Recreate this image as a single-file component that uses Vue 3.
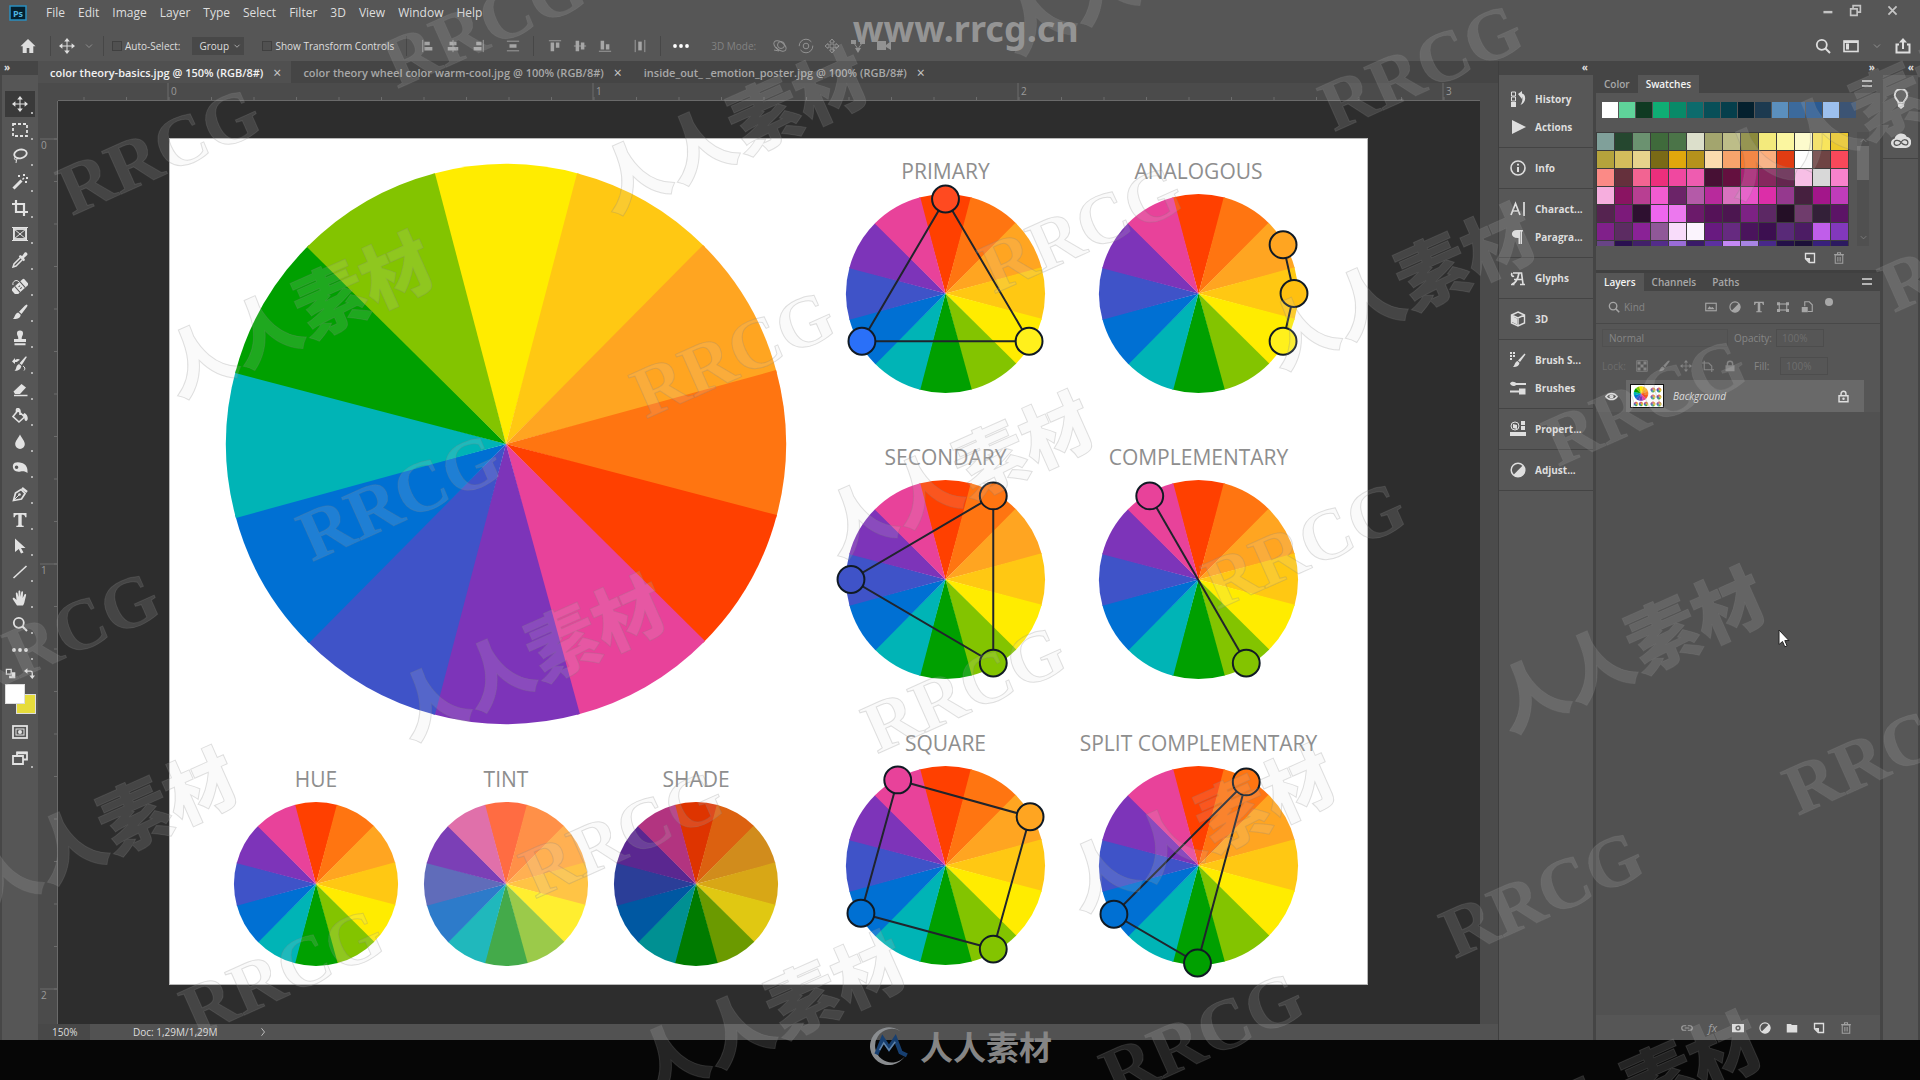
<script setup>
import { ref } from 'vue'

const menus = ['File', 'Edit', 'Image', 'Layer', 'Type', 'Select', 'Filter', '3D', 'View', 'Window', 'Help']

const tabs = [
  'color theory-basics.jpg @ 150% (RGB/8#)',
  'color theory wheel color warm-cool.jpg @ 100% (RGB/8#)',
  'inside_out_ _emotion_poster.jpg @ 100% (RGB/8#)'
]
const activeTab = ref(0)

const autoSelect = ref(false)
const showTransform = ref(false)

const solid = 'fill="currentColor" stroke="none"'

// 16x16 icon bodies, stroked with currentColor unless marked solid
const icons = {
  home: `<path ${solid} d="M8 1 0.5 8.2h2.2V15h4V10h2.6v5h4V8.2h2.2z"/>`,
  move: `<path d="M8 2.5v11M2.5 8h11"/><path ${solid} d="M8 0l2.8 3.4H5.2zM8 16l2.8-3.4H5.2zM0 8l3.4-2.8v5.6zM16 8l-3.4-2.8v5.6z"/>`,
  chevron: '<path d="M4 6l4 4 4-4"/>',
  chevronUp: '<path d="M4 10l4-4 4 4"/>',
  chevronRight: '<path d="M6 3l4 5-4 5"/>',
  alignL: `<path d="M2 1v14"/><path ${solid} d="M4 3h6v4H4zM4 9h9v4H4z"/>`,
  alignC: `<path d="M8 1v14"/><path ${solid} d="M4 3h8v4H4zM2 9h12v4H2z"/>`,
  alignR: `<path d="M14 1v14"/><path ${solid} d="M6 3h6v4H6zM3 9h9v4H3z"/>`,
  distV: `<path d="M1 2.5h14M1 13.5h14"/><path ${solid} d="M4 6h8v4H4z"/>`,
  alignT: `<path d="M1 2h14"/><path ${solid} d="M3 4h4v10H3zM9 4h4v6H9z"/>`,
  alignM: `<path d="M1 8h14"/><path ${solid} d="M3 2h4v12H3zM9 4h4v8H9z"/>`,
  alignB: `<path d="M1 14h14"/><path ${solid} d="M3 2h4v10H3zM9 6h4v6H9z"/>`,
  distH: `<path d="M2.5 1v14M13.5 1v14"/><path ${solid} d="M6 3h4v10H6z"/>`,
  dots: `<g ${solid}><circle cx="2" cy="8" r="1.9"/><circle cx="8" cy="8" r="1.9"/><circle cx="14" cy="8" r="1.9"/></g>`,
  orbit: '<ellipse cx="8" cy="8" rx="7" ry="4" transform="rotate(35 8 8)"/><circle cx="9" cy="7" r="3.5"/><path d="M2 12l5 1-3-4"/>',
  roll: '<circle cx="8" cy="8" r="6.8" stroke-dasharray="17 4"/><circle cx="8" cy="8" r="2.8"/>',
  pan3d: '<path d="M8 1l2.500 3H9v3h3V5.500l3 2.500-3 2.500V9H9v3h1.500L8 15l-2.500-3H7V9H4v1.500L1 8l3-2.500V7h3V4H5.500z"/>',
  slide3d: `<path ${solid} d="M1 2h5v4H1zM10 2h5v4h-5zM5 10h6l-3 5z"/><path d="M4 5l4 6 4-6"/>`,
  camera: `<path ${solid} d="M1 3h9v9H1zM10 7l5-4v9l-5-3z"/>`,
  search: '<circle cx="6.800" cy="6.800" r="5" stroke-width="1.800"/><path stroke-width="2" d="M10.500 10.500 15 15"/>',
  workspace: `<rect x="1" y="3" width="14" height="10.500" stroke-width="1.600"/><path ${solid} d="M3 5.500h3v6H3z"/><path d="M1 4h14" stroke-width="2"/>`,
  share: `<path stroke-width="2" d="M4 6.500H1.500V14.500h13V6.500H12"/><path stroke-width="2" d="M8 11V3"/><path ${solid} d="M8 0l4 4.500H4z"/>`,
  marquee: '<rect x="1" y="2" width="14" height="12" stroke-width="1.800" stroke-dasharray="3 2"/>',
  lasso: '<ellipse cx="8.500" cy="6" rx="6.300" ry="4.300" stroke-width="1.800" transform="rotate(-12 8 6)"/><path d="M3.500 9c-2 1.500-1 3.200 1 2.700 1.500-.5 1.300-1.700 0-2M4.500 12l-.5 3"/>',
  wand: `<path stroke-width="3" d="M1.500 14.500 9.500 6.500"/><path stroke-width="1.500" d="M10.500 5.500 12 4"/><path ${solid} d="M6 1h2v2H6zM11 0h2v2h-2zM14 3h2v2h-2zM13 7h2v2h-2z"/>`,
  crop: '<path stroke-width="2.200" d="M4 0v12h12M0 4h12v12"/>',
  frame: '<rect x="2" y="3" width="12" height="10" stroke-width="1.800"/><path d="M2 3l12 10M14 3 2 13M0 1.500h16M0 14.500h16M1.500 1v14M14.500 1v14"/>',
  dropper: `<path stroke-width="1.500" d="M9 5 2 12l-1 3 3-1 7-7"/><path ${solid} d="M8 3l2.200 1L12.500.800c1.500-1.500 4 .8 2.500 2.500L12 6l1 2-1.300 1.200L6.800 4.400z"/>`,
  heal: `<g transform="rotate(-42 8 9)"><rect ${solid} x="-.5" y="5" width="17" height="8" rx="1.500"/><path stroke="#565656" d="M4.500 5v8M11.500 5v8M7 8h2M7 10.500h2"/></g><path d="M1 7c-1-4 4-6 6-3"/>`,
  brush: `<path ${solid} d="M14.800.6c1 .6.8 1.400.2 2.200L9.500 10 7 7.800l6-6.400zM6.200 8.500l2.500 2.200C8.500 14 5 15.500.8 15c2-1 1.700-5.500 5.400-6.500z"/>`,
  stamp: `<path ${solid} d="M8 .5a3 3 0 0 1 3 3.200C11 5.500 9.500 6 9.700 9H14v3H2V9h4.300C6.500 6 5 5.500 5 3.700A3 3 0 0 1 8 .5zM2.500 13.300h11v1.900h-11z"/>`,
  history: `<path ${solid} d="M15 .8 9.800 9 7.500 7.200 13.500.500zM7 8l2.300 2C9 13.500 6 15 2.500 14.700 5 13 3.500 9.500 7 8zM0 5.500 3 2v2c2-1.500 4-1.500 5 0-1 0-2 1-3 2H3v2z"/><path d="M11 10c2 1 2.500 3 1 4.500"/>`,
  eraser: `<path ${solid} d="M9.500 2 14 5.500 8 12H3L1.500 9.500z"/><path d="M2 13.500h13.500" stroke-width="1.500"/>`,
  bucket: `<path stroke-width="1.600" d="M6 2.500 12.500 9 7 14 1 8.500zM4.500 4.500V2c0-2 3-2 3.500 1v4"/><path ${solid} d="M12.500 5c3.500 1.500 4.500 7 1.500 8-2-.5-1-3-3-6.500z"/>`,
  drop: `<path ${solid} d="M8 .5c2 4 4.800 6.500 4.800 9.700a4.800 4.800 0 0 1-9.600 0C3.200 7 6 4.500 8 .5z"/>`,
  dodge: `<path ${solid} fill-rule="evenodd" d="M1 5c1-3.500 6-3 9-2 3.500 1 6 4 5.500 10-2-1.500-4-2-7-1.500C4 12.500 0 10 1 5zm3.500.4a1.800 1.800 0 1 0 .1 3.600 1.800 1.800 0 0 0-.1-3.600z"/>`,
  pen: `<path stroke-width="1.700" d="M1.500 14.500 3.500 7 9 3.500l4 4L9.500 13z"/><path d="M2 14l5-5"/><circle ${solid} cx="7.500" cy="8.500" r="1.300"/><path stroke-width="2.500" d="M10 2l5 4"/>`,
  type: `<path ${solid} d="M1.500 1h13v4.200h-1.300C13 3.300 12 2.800 9.700 2.800v9.700c0 .9.500 1.200 2 1.200V15H4.300v-1.300c1.500 0 2-.3 2-1.200V2.800C4 2.800 3 3.300 2.800 5.200H1.500z"/>`,
  arrow: `<path ${solid} d="M3 .5 13.500 10H9l2.500 4.500-2.500 1L6.800 11 3 14z"/>`,
  line: '<path stroke-width="1.600" d="M1.500 14 14.500 2"/>',
  hand: `<path ${solid} d="M5 15.500 1 9.500c-1-1.600.7-2.200 1.700-1.200L4.500 10 3.800 3.500c0-1.400 1.500-1.500 1.800 0L6.500 7V1.500c0-1.500 1.800-1.500 1.800 0V7l1-5c.3-1.300 1.900-1 1.700.4L10.700 8l1.700-3.500c.7-1.200 2.100-.5 1.700.8L12.700 11c-.4 2-.8 3.300-1.700 4.500z"/>`,
  swapDefault: `<path stroke-width="1.800" d="M2 2h7v7H2z"/><path ${solid} d="M10 6h5v9H6v-4h4z"/>`,
  swap: `<path stroke-width="2" d="M4 4.500h5.500c2 0 2.500 1 2.500 2.500V12"/><path ${solid} d="M0 4.500 5 .5v8zM12 16 8 11h8z"/>`,
  mask: `<rect x="1" y="2" width="14" height="12" stroke-width="1.800"/><rect x="4" y="5" width="8" height="6"/><circle ${solid} cx="8" cy="8" r="2"/>`,
  screen: `<path stroke-width="1.800" d="M5 6V2.500h10v7h-4M1 6h10v8H1z"/><path stroke-width="2.500" d="M5 3h10"/>`,
  histPanel: `<path d="M1.500 1h4v4h-4zM1.500 6h4v4h-4z"/><path ${solid} d="M1 11h5v5H1zM8 3l4-3v2.500c4 .5 5 9-1.500 11.500 2.500-4 2-7 1.500-8.500V8z"/>`,
  play: `<path ${solid} d="M2 1l14 7-14 7z"/>`,
  info: `<circle cx="8" cy="8" r="7" stroke-width="1.600"/><path stroke-width="2" d="M8 7v5M8 3.700v1.800"/>`,
  character: '<path stroke-width="1.700" d="M1 14 5.500 2.500 10 14M2.800 10h5.600M14 1v14"/>',
  paragraph: `<path ${solid} d="M7 1h6v1.500h-1V15h-1.500V2.500H10V15H8.500V9C0 9.500 0 1 7 1z"/>`,
  glyphs: '<path stroke-width="1.700" d="M3 3h8.500l1.500 11M2 14c3 0 6-5 7-11M4 9.500h9M1 14.500h3.500M10 14.500h5M2 3c-1 2 0 4 2 3"/>',
  cube: `<path stroke-width="1.400" d="M8 1l6.500 3v8L8 15l-6.500-3V4zM1.500 4 8 7l6.500-3M8 7v8"/><path ${solid} d="M2 5l5 2.500v6L2 11z"/>`,
  brushSet: `<g ${solid}><path d="M0 0h2v2H0zM3 0h2v2H3zM0 3h2v2H0zM3 3h2v2H3zM0 6h2v2H0z"/><path d="M15.500 2.500 10 10 8 8.500 14.500 1.500zM7.500 9l2 2c-.5 3-3 4.300-6.500 4 2-1.500 1.500-5 4.500-6z"/></g>`,
  brushes: `<path stroke-width="2" d="M5 4h11M0 11.500h9"/><path ${solid} d="M0 3.500C1 1 5 1 7 4 5 7 1 6.500 0 3.500zM9 8.500h6.500v6H9z"/>`,
  properties: `<circle cx="5" cy="5" r="4"/><path ${solid} d="M3 3l4 1v4L3 7zM11 0h4v4h-4zM11 5h4v4h-4zM0 11h16v4H0z"/>`,
  adjust: `<circle cx="8" cy="8" r="6.800" stroke-width="1.500"/><path ${solid} d="M13 3.300A6.800 6.800 0 1 1 3.300 13z"/>`,
  bulb: `<path stroke-width="1.600" d="M6 11c0-2-3-3-3-6a5 5 0 0 1 10 0c0 3-3 4-3 6z"/><path ${solid} d="M5.500 12h5v2l-2.500 2-2.500-2z"/>`,
  cloud: `<path ${solid} d="M5 13.500C-1 14-1.500 7 3 6c1-5 8-5 9.500-1.500C18 5.500 17 13.500 12 13.500z"/><path stroke="#565656" d="M8 9.500C6 12.500 2.500 11.800 2.500 9.500S6 6.500 8 9s5.500 3 5.500.3-3.500-3.300-5.500-.300"/>`,
  newItem: `<path stroke-width="1.800" d="M2 2h12v12H7L2 9z"/><path ${solid} d="M2 8h6v6z"/>`,
  trash: '<path stroke-width="1.400" d="M3 4h10v11H3zM1.500 3.500h13M6 3V1h4v2M6.500 6.500v6M9.500 6.500v6"/>',
  pixels: `<rect x="1" y="3" width="14" height="10" stroke-width="1.500"/><path ${solid} d="M3 11l3-4 2 2 2-1 3 3z"/>`,
  shape: `<rect x="3" y="4" width="10" height="8" stroke-width="1.500"/><path ${solid} d="M0 1.500h4v4H0zM12 1.500h4v4h-4zM0 10.500h4v4H0zM12 10.500h4v4h-4z"/>`,
  smart: `<path stroke-width="1.500" d="M5 7V1h6l4 4v9H9"/><path ${solid} d="M1 8h8v7H1z"/>`,
  checker: `<rect x="1" y="1" width="14" height="14"/><path ${solid} d="M2 2h4v4H2zM10 2h4v4h-4zM6 6h4v4H6zM2 10h4v4H2zM10 10h4v4h-4z"/>`,
  artboard: '<path stroke-width="1.500" d="M3 1v12h13M0 4h9l4 4v8"/>',
  lockFill: `<path stroke-width="2" d="M4.500 8V5a3.500 3.500 0 0 1 7 0v3"/><path ${solid} d="M2 7h12v8H2z"/>`,
  lock: `<path stroke-width="1.800" d="M5 7V4.500a3 3 0 0 1 6 0V7M2.500 7h11v7.500h-11z"/><circle ${solid} cx="8" cy="10.700" r="1.500"/>`,
  eye: `<path stroke-width="1.800" d="M1 8c3.500-5 10.500-5 14 0-3.500 5-10.500 5-14 0z"/><circle ${solid} cx="8" cy="8" r="2.600"/>`,
  link: '<path stroke-width="1.600" d="M7 5H4a3 3 0 0 0 0 6h3M9 5h3a3 3 0 0 1 0 6H9M5 8h6"/>',
  addMask: `<path ${solid} fill-rule="evenodd" d="M0 2.500h16v11H0zM8 4.500a3.500 3.500 0 1 0 .1 7 3.500 3.500 0 0 0-.1-7z"/><circle ${solid} cx="8" cy="8" r="1.500"/>`,
  folder: `<path ${solid} d="M1 2.500h5.500L8 4h7v10H1z"/>`
}

const tools = [
  ['move', 'Move'], ['marquee', 'Marquee'], ['lasso', 'Lasso'], ['wand', 'Quick selection'],
  ['crop', 'Crop'], ['frame', 'Frame'], ['dropper', 'Eyedropper'], ['heal', 'Healing brush'],
  ['brush', 'Brush'], ['stamp', 'Clone stamp'], ['history', 'History brush'], ['eraser', 'Eraser'],
  ['bucket', 'Paint bucket'], ['drop', 'Blur'], ['dodge', 'Dodge'], ['pen', 'Pen'],
  ['type', 'Type'], ['arrow', 'Path selection'], ['line', 'Line'], ['hand', 'Hand'],
  ['search', 'Zoom'], ['dots', 'More tools']
]
const activeTool = ref('move')

const alignGroups = [
  ['alignL', 'alignC', 'alignR', 'distV'],
  ['alignT', 'alignM', 'alignB', 'distH']
]
const modes3d = ['orbit', 'roll', 'pan3d', 'slide3d', 'camera']

const dock = [
  [['histPanel', 'History'], ['play', 'Actions']],
  [['info', 'Info']],
  [['character', 'Charact...'], ['paragraph', 'Paragra...']],
  [['glyphs', 'Glyphs']],
  [['cube', '3D']],
  [['brushSet', 'Brush S...'], ['brushes', 'Brushes']],
  [['properties', 'Propert...']],
  [['adjust', 'Adjust...']]
]

const recent = ['#ffffff', '#5fd39a', '#0f3a22', '#0fae74', '#088a68', '#0d6b6c', '#084f58', '#053f4c', '#04202e', '#1d3a50', '#5b8fbd', '#3c6a9c', '#2a5a92', '#9cc0ee', '#3c5474']

const swatches = [
  '#80a09a', '#25472f', '#6b9270', '#3f6a3b', '#4b7448', '#dcdfcb', '#a3a56e', '#bdbd88', '#8b8a3c', '#f3ea7c', '#fbf6a0', '#fdfbcd', '#f8e45c', '#edc92c',
  '#b5a33c', '#d3bd5c', '#e6d38c', '#7a6a16', '#e0a70c', '#b5921c', '#fbdcae', '#f7a46c', '#f67a2e', '#fcae7c', '#e03c12', '#ffffff', '#6f4444', '#f8485a',
  '#fb8a86', '#65303c', '#f26492', '#ec2f7c', '#f048a0', '#ee5cb0', '#471034', '#64103f', '#a82274', '#86285e', '#64264f', '#f7bfe6', '#d8d8d8', '#f882cc',
  '#f6aede', '#8a1462', '#b83f92', '#f25cd0', '#6b2468', '#b45aa8', '#b82a9c', '#d872be', '#e852c8', '#dc2ea8', '#95398e', '#46203f', '#a3168a', '#c03cba',
  '#552350', '#7c1a7a', '#2e1030', '#ee66ee', '#ec78ee', '#6b1a6a', '#551258', '#4c1650', '#7d2284', '#5c2864', '#240f26', '#6f3c6c', '#332038', '#5c1466',
  '#80208a', '#5c2c62', '#8a2296', '#905898', '#f8dcfa', '#fbf4fd', '#681a80', '#662a80', '#4a145c', '#3c0f50', '#592a78', '#4c1c64', '#c05eea', '#8238bc',
  '#684486', '#2a1050', '#42206a', '#532c8a', '#9a6cd8', '#3a1a68', '#5c30a0', '#c488f4', '#a884e4', '#48288a', '#241048', '#1c1038', '#38207c', '#2c1a60'
]

// clockwise, starting with the sector centred on twelve o'clock
const hue = ['#ff4000', '#ff7511', '#ffa521', '#ffc813', '#ffec00', '#83c400', '#00a000', '#00b4b6', '#0070d3', '#3f53c8', '#7d34b9', '#e8429a']
const tint = ['#ff6c42', '#ff9048', '#ffb052', '#ffc445', '#ffee30', '#9bca4a', '#44aa4a', '#20b8bc', '#2d7bca', '#606cba', '#7b3fb6', '#e070aa']
const shade = ['#de3400', '#dc6110', '#d18c1c', '#d8a716', '#e0c812', '#6b9a00', '#007b00', '#009092', '#0058a2', '#2b3e98', '#5a2790', '#b23480']
const wheel = [4, 3, 2, 1, 0, 11, 10, 9, 8, 7, 6, 5].map(i => hue[i])

const variants = [
  { name: 'HUE', colors: hue },
  { name: 'TINT', colors: tint },
  { name: 'SHADE', colors: shade }
]

const harmonies = [
  { name: 'PRIMARY', closed: true, nodes: [[0, -95, '#ff4a20'], [84, 48, '#fff01c'], [-84, 48, '#2a70f8']] },
  { name: 'ANALOGOUS', closed: false, nodes: [[85, -49, '#ffa521'], [96, 0, '#ffc010'], [85, 48, '#fff01c']] },
  { name: 'SECONDARY', closed: true, nodes: [[48, -84, '#ff7511'], [48, 84, '#83c400'], [-95, 0, '#3f53c8']] },
  { name: 'COMPLEMENTARY', closed: false, nodes: [[-49, -84, '#e8429a'], [48, 84, '#83c400']] },
  { name: 'SQUARE', closed: true, nodes: [[-48, -86, '#e8429a'], [85, -49, '#ffa521'], [48, 84, '#83c400'], [-85, 48, '#0070d3']] },
  { name: 'SPLIT COMPLEMENTARY', closed: true, nodes: [[48, -84, '#ff7511'], [-1, 98, '#00a000'], [-85, 49, '#0070d3']] }
]

function sector(i) {
  const point = deg => {
    const a = (deg - 90) * Math.PI / 180
    return `${(100 * Math.cos(a)).toFixed(2)} ${(100 * Math.sin(a)).toFixed(2)}`
  }
  return `M0 0L${point(i * 30 - 15.3)}A100 100 0 0 1 ${point(i * 30 + 15.3)}Z`
}

function outline(h) {
  return 'M' + h.nodes.map(n => `${n[0]} ${n[1]}`).join('L') + (h.closed ? 'Z' : '')
}

// ruler: one inch is 425 px at this zoom
const inch = 425
const hTicks = Array.from({ length: 34 }, (_, i) => 111 + (i - 2) * inch / 10)
const vTicks = Array.from({ length: 22 }, (_, i) => 38 + i * inch / 10)

// watermark centres, in percent of the window
const marks = [
  ['RRCG', 8.3, 14], ['RRCG', 25.2, 2.2], ['RRCG', 38.2, 32.8], ['RRCG', 56.3, 21.2],
  ['RRCG', 74, 6.2], ['RRCG', 20.8, 46], ['RRCG', 67.9, 50.5], ['RRCG', 50.2, 63.8],
  ['RRCG', 3, 58.8], ['RRCG', 32.4, 77.2], ['RRCG', 14.7, 90], ['RRCG', 80.3, 82.8],
  ['RRCG', 98.2, 69.5], ['RRCG', 85.7, 37.2], ['RRCG', 62.6, 95.8], ['RRCG', 103.2, 23],
  ['人人素材', 38, 11.8], ['人人素材', 72.8, 26.2], ['人人素材', 15.4, 28.8], ['人人素材', 49.8, 43.6],
  ['人人素材', 27.5, 60.6], ['人人素材', 5.2, 76.6], ['人人素材', 62.4, 76.4], ['人人素材', 84.8, 59.8],
  ['人人素材', 40, 93.6], ['人人素材', 84.6, 101], ['人人素材', 96.5, 10.5], ['人人素材', 59, -3]
]
</script>

<template>
  <div class="page">
    <div class="app">
      <header class="menubar">
        <svg class="logo" viewBox="0 0 18 16" aria-label="Ps">
          <rect x="1" y="1" width="16" height="14" fill="#04202f" stroke="#2a8fc0" stroke-width="1.5" />
          <text x="9" y="12" text-anchor="middle">Ps</text>
        </svg>
        <nav class="menus">
          <button v-for="m in menus" :key="m">{{ m }}</button>
        </nav>
        <div class="window-buttons">
          <button aria-label="Minimize"><svg viewBox="0 0 16 16"><path stroke-width="3" d="M3 10h11" /></svg></button>
          <button aria-label="Restore"><svg viewBox="0 0 16 16"><path stroke-width="2" d="M5 6V2h9v8h-4M2 6h8v8H2z" /></svg></button>
          <button aria-label="Close" class="close"><svg viewBox="0 0 16 16"><path stroke-width="2.2" d="M3 3l10 10M13 3 3 13" /></svg></button>
        </div>
      </header>

      <div class="options">
        <button class="icon-btn home" aria-label="Home"><svg viewBox="0 0 16 16" v-html="icons.home" /></button>
        <span class="sep"></span>
        <button class="icon-btn" aria-label="Move tool"><svg viewBox="0 0 16 16" v-html="icons.move" /></button>
        <button class="icon-btn dim small" aria-label="Tool presets"><svg viewBox="0 0 16 16" v-html="icons.chevron" /></button>
        <span class="sep"></span>
        <label class="check"><input v-model="autoSelect" type="checkbox" />Auto-Select:</label>
        <span class="select">
          <select aria-label="Auto-select target"><option>Group</option><option>Layer</option></select>
          <svg viewBox="0 0 16 16" v-html="icons.chevron" />
        </span>
        <label class="check"><input v-model="showTransform" type="checkbox" />Show Transform Controls</label>
        <template v-for="(g, i) in alignGroups" :key="i">
          <span class="sep wide"></span>
          <button v-for="a in g" :key="a" class="icon-btn align" :class="{ dist: a.startsWith('dist') }" :aria-label="a">
            <svg viewBox="0 0 16 16" v-html="icons[a]" />
          </button>
        </template>
        <span class="sep wide"></span>
        <button class="icon-btn bright" aria-label="More"><svg viewBox="0 0 16 16" v-html="icons.dots" /></button>
        <span class="mode-label">3D Mode:</span>
        <button v-for="m in modes3d" :key="m" class="icon-btn mode" :aria-label="m">
          <svg viewBox="0 0 16 16" v-html="icons[m]" />
        </button>
        <div class="options-right">
          <button class="icon-btn" aria-label="Search"><svg viewBox="0 0 16 16" v-html="icons.search" /></button>
          <button class="icon-btn" aria-label="Workspace"><svg viewBox="0 0 16 16" v-html="icons.workspace" /></button>
          <button class="icon-btn dim small" aria-label="Workspace list"><svg viewBox="0 0 16 16" v-html="icons.chevron" /></button>
          <button class="icon-btn" aria-label="Share"><svg viewBox="0 0 16 16" v-html="icons.share" /></button>
        </div>
      </div>

      <div class="body">
        <aside class="toolbar">
          <div class="collapse start">»</div>
          <div class="tools">
            <button
              v-for="[icon, name] in tools"
              :key="icon"
              class="tool"
              :class="{ active: activeTool === icon }"
              :aria-label="name"
              @click="activeTool = icon"
            >
              <svg viewBox="0 0 16 16" v-html="icons[icon]" />
            </button>
            <div class="mini">
              <button aria-label="Default colors"><svg viewBox="0 0 16 16" v-html="icons.swapDefault" /></button>
              <button aria-label="Swap colors"><svg viewBox="0 0 16 16" v-html="icons.swap" /></button>
            </div>
            <div class="fgbg"><span class="bg"></span><span class="fg"></span></div>
            <button class="tool plain" aria-label="Quick mask"><svg viewBox="0 0 16 16" v-html="icons.mask" /></button>
            <button class="tool" aria-label="Screen mode"><svg viewBox="0 0 16 16" v-html="icons.screen" /></button>
          </div>
        </aside>

        <main class="workspace">
          <div class="tabs">
            <div v-for="(t, i) in tabs" :key="t" class="tab" :class="{ active: activeTab === i }">
              <button class="tab-name" @click="activeTab = i">{{ t }}</button>
              <button class="tab-close" aria-label="Close tab">×</button>
            </div>
          </div>
          <div class="sheet">
            <svg class="ruler-h">
              <path v-for="x in hTicks" :key="x" :d="`M${x} 14v4`" />
              <g v-for="n in [0, 1, 2, 3]" :key="n">
                <path :d="`M${110 + n * inch} 0v18`" />
                <text :x="113 + n * inch" y="12">{{ n }}</text>
              </g>
            </svg>
            <svg class="ruler-v">
              <path v-for="y in vTicks" :key="y" :d="`M16 ${y}h4`" />
              <g v-for="n in [0, 1, 2]" :key="n">
                <path :d="`M2 ${38 + n * inch}h18`" />
                <text x="3" :y="48 + n * inch">{{ n }}</text>
              </g>
            </svg>
            <div class="canvas">
              <article class="paper">
                <section class="left">
                  <svg class="wheel" viewBox="-100 -100 200 200" aria-label="Color wheel">
                    <path v-for="(c, i) in wheel" :key="c" :d="sector(i)" :fill="c" />
                  </svg>
                  <div class="variants">
                    <figure v-for="v in variants" :key="v.name">
                      <figcaption>{{ v.name }}</figcaption>
                      <svg class="wheel" viewBox="-100 -100 200 200">
                        <path v-for="(c, i) in v.colors" :key="c" :d="sector(i)" :fill="c" />
                      </svg>
                    </figure>
                  </div>
                </section>
                <section class="harmonies">
                  <figure v-for="h in harmonies" :key="h.name">
                    <figcaption>{{ h.name }}</figcaption>
                    <svg class="wheel" viewBox="-100 -100 200 200">
                      <path v-for="(c, i) in hue" :key="c" :d="sector(i)" :fill="c" />
                      <path class="outline" :d="outline(h)" />
                      <circle v-for="n in h.nodes" :key="n[2]" class="node" :cx="n[0]" :cy="n[1]" r="13.5" :fill="n[2]" />
                    </svg>
                  </figure>
                </section>
              </article>
            </div>
          </div>
          <footer class="status">
            <span class="zoom">150%</span>
            <span class="doc">Doc: 1,29M/1,29M</span>
            <svg viewBox="0 0 16 16" v-html="icons.chevronRight" />
          </footer>
        </main>

        <aside class="dock">
          <div class="collapse">«</div>
          <div class="dock-body">
            <div v-for="(g, i) in dock" :key="i" class="dock-group">
              <button v-for="[icon, name] in g" :key="name">
                <svg viewBox="0 0 16 16" v-html="icons[icon]" />{{ name }}
              </button>
            </div>
          </div>
        </aside>

        <aside class="panels">
          <div class="collapse">»</div>
          <section class="panel">
            <div class="panel-tabs">
              <button>Color</button>
              <button class="active">Swatches</button>
              <span class="burger"></span>
            </div>
            <div class="recent">
              <i v-for="(c, i) in recent" :key="i" :style="{ background: c }"></i>
            </div>
            <div class="swatch-wrap">
              <div class="swatches">
                <i v-for="(c, i) in swatches" :key="i" :style="{ background: c }"></i>
              </div>
              <div class="scroll">
                <svg viewBox="0 0 16 16" v-html="icons.chevronUp" />
                <span class="thumb"></span>
                <svg viewBox="0 0 16 16" v-html="icons.chevron" />
              </div>
            </div>
            <div class="panel-foot">
              <button aria-label="New swatch"><svg viewBox="0 0 16 16" v-html="icons.newItem" /></button>
              <button class="dim" aria-label="Delete swatch"><svg viewBox="0 0 16 16" v-html="icons.trash" /></button>
            </div>
          </section>

          <section class="panel layers">
            <div class="panel-tabs">
              <button class="active">Layers</button>
              <button>Channels</button>
              <button>Paths</button>
              <span class="burger"></span>
            </div>
            <div class="filter">
              <svg viewBox="0 0 16 16" v-html="icons.search" />
              <select aria-label="Filter kind"><option>Kind</option></select>
              <button v-for="k in ['pixels', 'adjust', 'type', 'shape', 'smart']" :key="k" :aria-label="k">
                <svg viewBox="0 0 16 16" v-html="icons[k]" />
              </button>
              <span class="knob"></span>
            </div>
            <div class="blend">
              <select aria-label="Blend mode"><option>Normal</option></select>
              <label for="opacity">Opacity:</label>
              <input id="opacity" value="100%" />
            </div>
            <div class="locks">
              <span class="lock-label">Lock:</span>
              <button v-for="k in ['checker', 'brush', 'move', 'artboard', 'lockFill']" :key="k" :aria-label="k">
                <svg viewBox="0 0 16 16" v-html="icons[k]" />
              </button>
              <label for="fill">Fill:</label>
              <input id="fill" value="100%" />
            </div>
            <div class="layer">
              <button class="eye" aria-label="Toggle visibility"><svg viewBox="0 0 16 16" v-html="icons.eye" /></button>
              <div class="layer-row">
                <svg class="preview" viewBox="0 0 34 24">
                  <rect width="34" height="24" fill="#fff" stroke="#111" stroke-width="2" />
                  <g transform="translate(11 9.5) scale(.073)">
                    <path v-for="(c, i) in wheel" :key="c" :d="sector(i)" :fill="c" />
                  </g>
                  <g v-for="y in [6, 13, 20]" :key="y">
                    <g v-for="x in [23, 29]" :key="x" :transform="`translate(${x} ${y}) scale(.024)`">
                      <path v-for="(c, i) in shade" :key="c" :d="sector(i)" :fill="c" />
                    </g>
                  </g>
                  <g v-for="x in [6, 11, 16]" :key="x" :transform="`translate(${x} 20) scale(.022)`">
                    <path v-for="(c, i) in shade" :key="c" :d="sector(i)" :fill="c" />
                  </g>
                </svg>
                <span class="layer-name">Background</span>
                <svg class="layer-lock" viewBox="0 0 16 16" v-html="icons.lock" />
              </div>
            </div>
            <div class="layers-space"></div>
            <div class="layers-foot">
              <button class="dim" aria-label="Link layers"><svg viewBox="0 0 16 16" v-html="icons.link" /></button>
              <button class="dim fx">fx</button>
              <button aria-label="Add mask"><svg viewBox="0 0 16 16" v-html="icons.addMask" /></button>
              <button aria-label="Adjustment layer"><svg viewBox="0 0 16 16" v-html="icons.adjust" /></button>
              <button aria-label="New group"><svg viewBox="0 0 16 16" v-html="icons.folder" /></button>
              <button aria-label="New layer"><svg viewBox="0 0 16 16" v-html="icons.newItem" /></button>
              <button class="dim" aria-label="Delete layer"><svg viewBox="0 0 16 16" v-html="icons.trash" /></button>
            </div>
          </section>
        </aside>

        <aside class="strip">
          <div class="collapse">«</div>
          <div class="strip-icons">
            <button aria-label="Learn"><svg viewBox="0 0 16 16" v-html="icons.bulb" /></button>
            <button aria-label="Libraries"><svg viewBox="0 0 16 16" v-html="icons.cloud" /></button>
          </div>
          <div class="strip-rest"></div>
        </aside>
      </div>
    </div>

    <div class="overlay">
      <span
        v-for="([text, x, y], i) in marks"
        :key="i"
        class="mark"
        :class="{ cjk: text !== 'RRCG' }"
        :style="{ left: x + '%', top: y + '%' }"
      >{{ text }}</span>
      <span class="site">www.rrcg.cn</span>
      <div class="brand">
        <svg viewBox="0 0 40 40">
          <path d="M31 6A18 18 0 1 0 35 30 16 16 0 1 1 31 6z" fill="#8a8d90" />
          <path d="M8 28 14 13l6 9 6-9 5 13 6 3" fill="none" stroke="#173f70" stroke-width="4" />
          <path d="M11 24l4-7 5 7 6-8" fill="none" stroke="#5f82a8" stroke-width="1.5" />
        </svg>
        <span>人人素材</span>
      </div>
      <svg class="cursor" viewBox="0 0 12 19">
        <path d="M1 1v14.5l3.500-3 2.300 5.300 2.300-1-2.300-5.200H11z" fill="#fff" stroke="#222" />
      </svg>
    </div>
  </div>
</template>

<style>
body {
  margin: 0;
  background: #060606;
}
</style>

<style scoped>
.page {
  position: relative;
  min-height: 100vh;
  box-sizing: border-box;
  padding-bottom: 40px;
  display: flex;
  overflow: hidden;
  background: #060606;
  color: #dedede;
  font: 11px/16px 'Open Sans', 'Noto Sans', 'Noto Sans CJK SC', sans-serif;
}

.app {
  flex: 1;
  min-width: 0;
  display: flex;
  flex-direction: column;
  background: #565656;
}

button,
select,
input {
  font: inherit;
  color: inherit;
  background: none;
  border: none;
  padding: 0;
  margin: 0;
}

button {
  display: flex;
  align-items: center;
  justify-content: center;
  white-space: nowrap;
}

svg {
  display: block;
  flex: none;
  width: 16px;
  height: 16px;
  fill: none;
  stroke: currentColor;
}

.menubar {
  height: 25px;
  display: flex;
  align-items: center;
  padding-left: 9px;
}

.logo {
  width: 18px;
}

.logo text {
  font: bold 9px 'Open Sans', sans-serif;
  fill: #4fb4e0;
  stroke: none;
}

.menus {
  display: flex;
  gap: 13px;
  margin-left: 19px;
  font-size: 12px;
}

.window-buttons {
  height: 20px;
  margin-left: auto;
  margin-bottom: auto;
  padding-right: 21px;
  display: flex;
  gap: 15px;
  color: #c4c4c4;
}

.window-buttons .close {
  margin-left: 9px;
}

.window-buttons svg {
  width: 13px;
  height: 13px;
}

.options {
  height: 36px;
  box-sizing: border-box;
  display: flex;
  align-items: center;
  padding: 5px 9px 0 20px;
  gap: 8px;
  font-size: 10px;
}

.sep {
  width: 1px;
  height: 20px;
  background: #474747;
}

.sep.wide {
  margin: 0 4px;
}

.home {
  margin-right: 6px;
}

.dim {
  color: #a0a0a0;
}

.small svg {
  width: 12px;
  height: 12px;
}

.check {
  display: flex;
  align-items: center;
  gap: 3px;
  white-space: nowrap;
}

.check input {
  appearance: none;
  width: 10px;
  height: 10px;
  border: 1px solid #404040;
  background: #505050;
}

.select {
  position: relative;
  margin: 0 10px 0 4px;
}

.select select {
  appearance: none;
  width: 52px;
  height: 18px;
  padding-left: 7px;
  background: #484848;
}

.select svg {
  position: absolute;
  right: 2px;
  top: 4px;
  width: 10px;
  height: 10px;
}

.align {
  color: #a6a6a6;
  width: 17px;
}

.align svg {
  width: 14px;
  height: 14px;
}

.dist {
  margin-left: 10px;
}

.bright {
  color: #ffffff;
}

.mode-label {
  margin-left: 14px;
  width: 52px;
  color: #828282;
  white-space: nowrap;
}

.mode {
  color: #929292;
  width: 18px;
}

.options-right {
  margin-left: auto;
  display: flex;
  gap: 12px;
}

.body {
  flex: 1;
  display: flex;
  background: #454545;
}

.collapse {
  height: 14px;
  padding-right: 5px;
  text-align: right;
  font-size: 10px;
  font-weight: 700;
  line-height: 12px;
  background: #454545;
}

.collapse.start {
  text-align: left;
  padding-left: 4px;
}

.toolbar {
  width: 38px;
  display: flex;
  flex-direction: column;
}

.tools {
  flex: 1;
  padding-top: 16px;
  display: flex;
  flex-direction: column;
  align-items: center;
  background: #565656;
  border-left: 2px solid #474747;
}

.tool {
  position: relative;
  width: 30px;
  height: 26px;
  color: #e2e2e2;
}

.tool::after {
  content: '';
  position: absolute;
  right: 2px;
  bottom: 3px;
  border: 1px solid #b0b0b0;
}

.tool.plain::after {
  display: none;
}

.tool.active {
  background: #3a3a3a;
}

.mini {
  display: flex;
  gap: 8px;
  padding: 5px 0;
}

.mini svg {
  width: 11px;
  height: 11px;
}

.fgbg {
  position: relative;
  width: 31px;
  height: 30px;
  margin-bottom: 5px;
}

.fg,
.bg {
  position: absolute;
  width: 18px;
  height: 18px;
  border: 1px solid #ddd;
}

.fg {
  left: 0;
  top: 0;
  background: #ffffff;
}

.bg {
  right: 0;
  bottom: 0;
  background: #e6dc3c;
}

.workspace {
  flex: 1;
  min-width: 0;
  display: flex;
  flex-direction: column;
  background: #4b4b4b;
}

.tabs {
  height: 22px;
  display: flex;
  background: #454545;
}

.tab {
  display: flex;
  align-items: center;
  gap: 10px;
  padding: 2px 10px 0 12px;
  color: #a8a8a8;
}

.tab.active {
  background: #505050;
  color: #f2f2f2;
}

.tab-name {
  font-weight: 600;
}

.tab-close {
  font-size: 14px;
  color: #c8c8c8;
}

.sheet {
  flex: 1;
  display: grid;
  grid-template-columns: 20px minmax(0, 1fr);
  grid-template-rows: 18px 1fr;
  padding-right: 18px;
}

.ruler-h {
  grid-column: 2;
  width: 100%;
  height: 18px;
  border-bottom: 1px solid #6a6a6a;
  box-sizing: border-box;
}

.ruler-v {
  grid-row: 2;
  width: 20px;
  height: 100%;
  border-right: 1px solid #6a6a6a;
  box-sizing: border-box;
}

.ruler-h path,
.ruler-v path {
  stroke: #6c6c6c;
}

.ruler-h text,
.ruler-v text {
  font: 10px 'Open Sans', sans-serif;
  fill: #9a9a9a;
  stroke: none;
}

.canvas {
  grid-column: 2;
  grid-row: 2;
  padding: 38px 113px 39px 112px;
  background: #2d2d2d;
}

.paper {
  display: grid;
  grid-template-columns: 560fr 452fr;
  column-gap: 60px;
  padding: 20px 69px 18px 56px;
  background: #ffffff;
  outline: 1px solid #b8b8b8;
}

.wheel {
  width: 100%;
  height: auto;
  overflow: visible;
}

.wheel path {
  stroke: none;
}

.left {
  display: flex;
  flex-direction: column;
  gap: 43px;
  padding-top: 5px;
}

.variants {
  display: grid;
  grid-template-columns: repeat(3, 1fr);
  gap: 26px;
  padding: 0 8px;
}

.harmonies {
  display: grid;
  grid-template-columns: 1fr 1fr;
  gap: 52px 54px;
  align-content: start;
}

figure {
  margin: 0;
  min-width: 0;
  display: flex;
  flex-direction: column;
  align-items: center;
  gap: 11px;
}

figcaption {
  font-size: 21px;
  line-height: 24px;
  color: #8e8e8e;
  white-space: nowrap;
}

.wheel .outline {
  stroke: #20242c;
  stroke-width: 2;
}

.node {
  stroke: #101a24;
  stroke-width: 2;
}

.status {
  height: 16px;
  display: flex;
  align-items: center;
  font-size: 10px;
  background: #525252;
}

.zoom {
  width: 38px;
  padding-left: 14px;
  background: #484848;
}

.doc {
  width: 124px;
  padding-left: 43px;
}

.status svg {
  width: 12px;
  height: 12px;
}

.dock {
  width: 94px;
  display: flex;
  flex-direction: column;
  border-left: 1px solid #3f3f3f;
  margin-right: 3px;
}

.dock-body {
  flex: 1;
  padding-top: 4px;
  background: #575757;
}

.dock-group {
  padding: 6px 0 6px 11px;
  border-bottom: 1px solid #444;
}

.dock-group button {
  height: 28px;
  gap: 9px;
  font-size: 10px;
  font-weight: 700;
}

.panels {
  width: 284px;
  display: flex;
  flex-direction: column;
}

.panel {
  background: #565656;
}

.panel-tabs {
  height: 18px;
  display: flex;
  align-items: stretch;
  padding-right: 8px;
  background: #454545;
  color: #a8a8a8;
  font-size: 10px;
  font-weight: 600;
}

.panel-tabs button {
  padding: 0 8px;
}

.panel-tabs .active {
  background: #565656;
  color: #f4f4f4;
}

.burger {
  margin: 5px 0 0 auto;
  width: 10px;
  height: 3px;
  border: solid #b4b4b4;
  border-width: 2px 0;
}

.recent {
  display: flex;
  gap: 1px;
  padding: 9px 6px 14px;
}

.recent i {
  width: 16px;
  height: 16px;
}

.swatch-wrap {
  display: flex;
  height: 114px;
}

.swatches {
  display: grid;
  grid-template-columns: repeat(14, 17px);
  grid-auto-rows: 17px;
  gap: 1px;
  padding: 1px;
  overflow: hidden;
  background: #3c3c3c;
}

.scroll {
  margin-left: 8px;
  width: 12px;
  padding: 3px 0;
  display: flex;
  flex-direction: column;
  align-items: center;
  color: #8a8a8a;
  background: #505050;
}

.scroll svg {
  width: 11px;
  height: 11px;
}

.thumb {
  width: 12px;
  height: 34px;
  margin-bottom: auto;
  background: #6c6c6c;
}

.panel-foot {
  height: 24px;
  display: flex;
  align-items: center;
  justify-content: flex-end;
  gap: 17px;
  padding-right: 35px;
}

.panel-foot svg,
.layers-foot svg {
  width: 12px;
  height: 12px;
}

.layers {
  flex: 1;
  display: flex;
  flex-direction: column;
  border-top: 3px solid #404040;
}

.filter,
.blend,
.locks {
  display: flex;
  align-items: center;
  padding-left: 6px;
  font-size: 10px;
}

.filter {
  height: 32px;
  padding-left: 12px;
  gap: 12px;
  color: #a6a6a6;
  border-bottom: 1px solid #484848;
}

.filter svg,
.locks svg {
  width: 12px;
  height: 12px;
}

.filter select {
  appearance: none;
  width: 69px;
  margin-left: -8px;
  color: #868686;
}

.knob {
  width: 8px;
  height: 8px;
  margin-bottom: 10px;
  border-radius: 50%;
  background: #a8a8a8;
}

.blend {
  height: 28px;
  color: #868686;
}

.blend select {
  appearance: none;
  width: 126px;
  height: 18px;
  padding-left: 6px;
  border: 1px solid #505050;
}

.blend label {
  width: 42px;
  margin-left: 6px;
}

.blend input,
.locks input {
  width: 48px;
  padding-left: 5px;
  border: 1px solid #4d4d4d;
  box-sizing: border-box;
  color: #6e6e6e;
}

.locks {
  height: 28px;
  gap: 10px;
  color: #868686;
}

.lock-label {
  width: 24px;
  color: #6c6c6c;
}

.locks label {
  margin-left: 8px;
  width: 16px;
}

.layer {
  height: 32px;
  display: flex;
}

.eye {
  width: 30px;
}

.eye svg,
.layer-lock {
  width: 13px;
  height: 13px;
}

.layer-row {
  flex: 1;
  display: flex;
  align-items: center;
  margin-right: 16px;
  padding: 0 14px 0 4px;
  background: #696969;
}

.preview {
  width: 34px;
  height: 24px;
}

.preview path {
  stroke: none;
}

.layer-name {
  flex: 1;
  padding-left: 9px;
  font-size: 10px;
  font-style: italic;
}

.layers-space {
  flex: 1;
  background: #515151;
}

.layers-foot {
  height: 25px;
  display: flex;
  align-items: center;
  justify-content: flex-end;
  gap: 15px;
  padding-right: 28px;
}

.fx {
  font-style: italic;
}

.strip {
  width: 40px;
  display: flex;
  flex-direction: column;
}

.strip .collapse {
  padding-right: 6px;
}

.strip-icons,
.strip-rest {
  margin: 0 2px 0 3px;
  background: #575757;
}

.strip-icons {
  display: flex;
  flex-direction: column;
  align-items: center;
  gap: 22px;
  padding: 14px 0 7px;
  border-bottom: 1px solid #444;
}

.strip-icons svg {
  width: 20px;
  height: 20px;
}

.strip-rest {
  flex: 1;
}

.overlay {
  position: absolute;
  inset: 0;
  overflow: hidden;
  pointer-events: none;
}

.mark {
  position: absolute;
  transform: translate(-50%, -50%) rotate(-24deg);
  font: bold 72px/80px 'Liberation Serif', serif;
  color: rgba(222, 222, 222, 0.14);
  -webkit-text-stroke: 1px rgba(128, 128, 128, 0.24);
  white-space: nowrap;
}

.mark.cjk {
  font: 900 72px/80px 'Noto Sans CJK SC', sans-serif;
}

.site {
  position: absolute;
  left: 50.3%;
  top: 9px;
  transform: translateX(-50%);
  font: bold 36px/40px 'Noto Sans', sans-serif;
  color: #949494;
}

.brand {
  position: absolute;
  left: 50%;
  bottom: 13px;
  transform: translateX(-50%);
  display: flex;
  align-items: center;
  gap: 10px;
  font: bold 33px/40px 'Noto Sans CJK SC', sans-serif;
  color: #858585;
}

.brand svg {
  width: 42px;
  height: 42px;
  stroke: none;
}

.cursor {
  position: absolute;
  left: 92.6%;
  top: 58.2%;
  width: 12px;
  height: 19px;
}
</style>
